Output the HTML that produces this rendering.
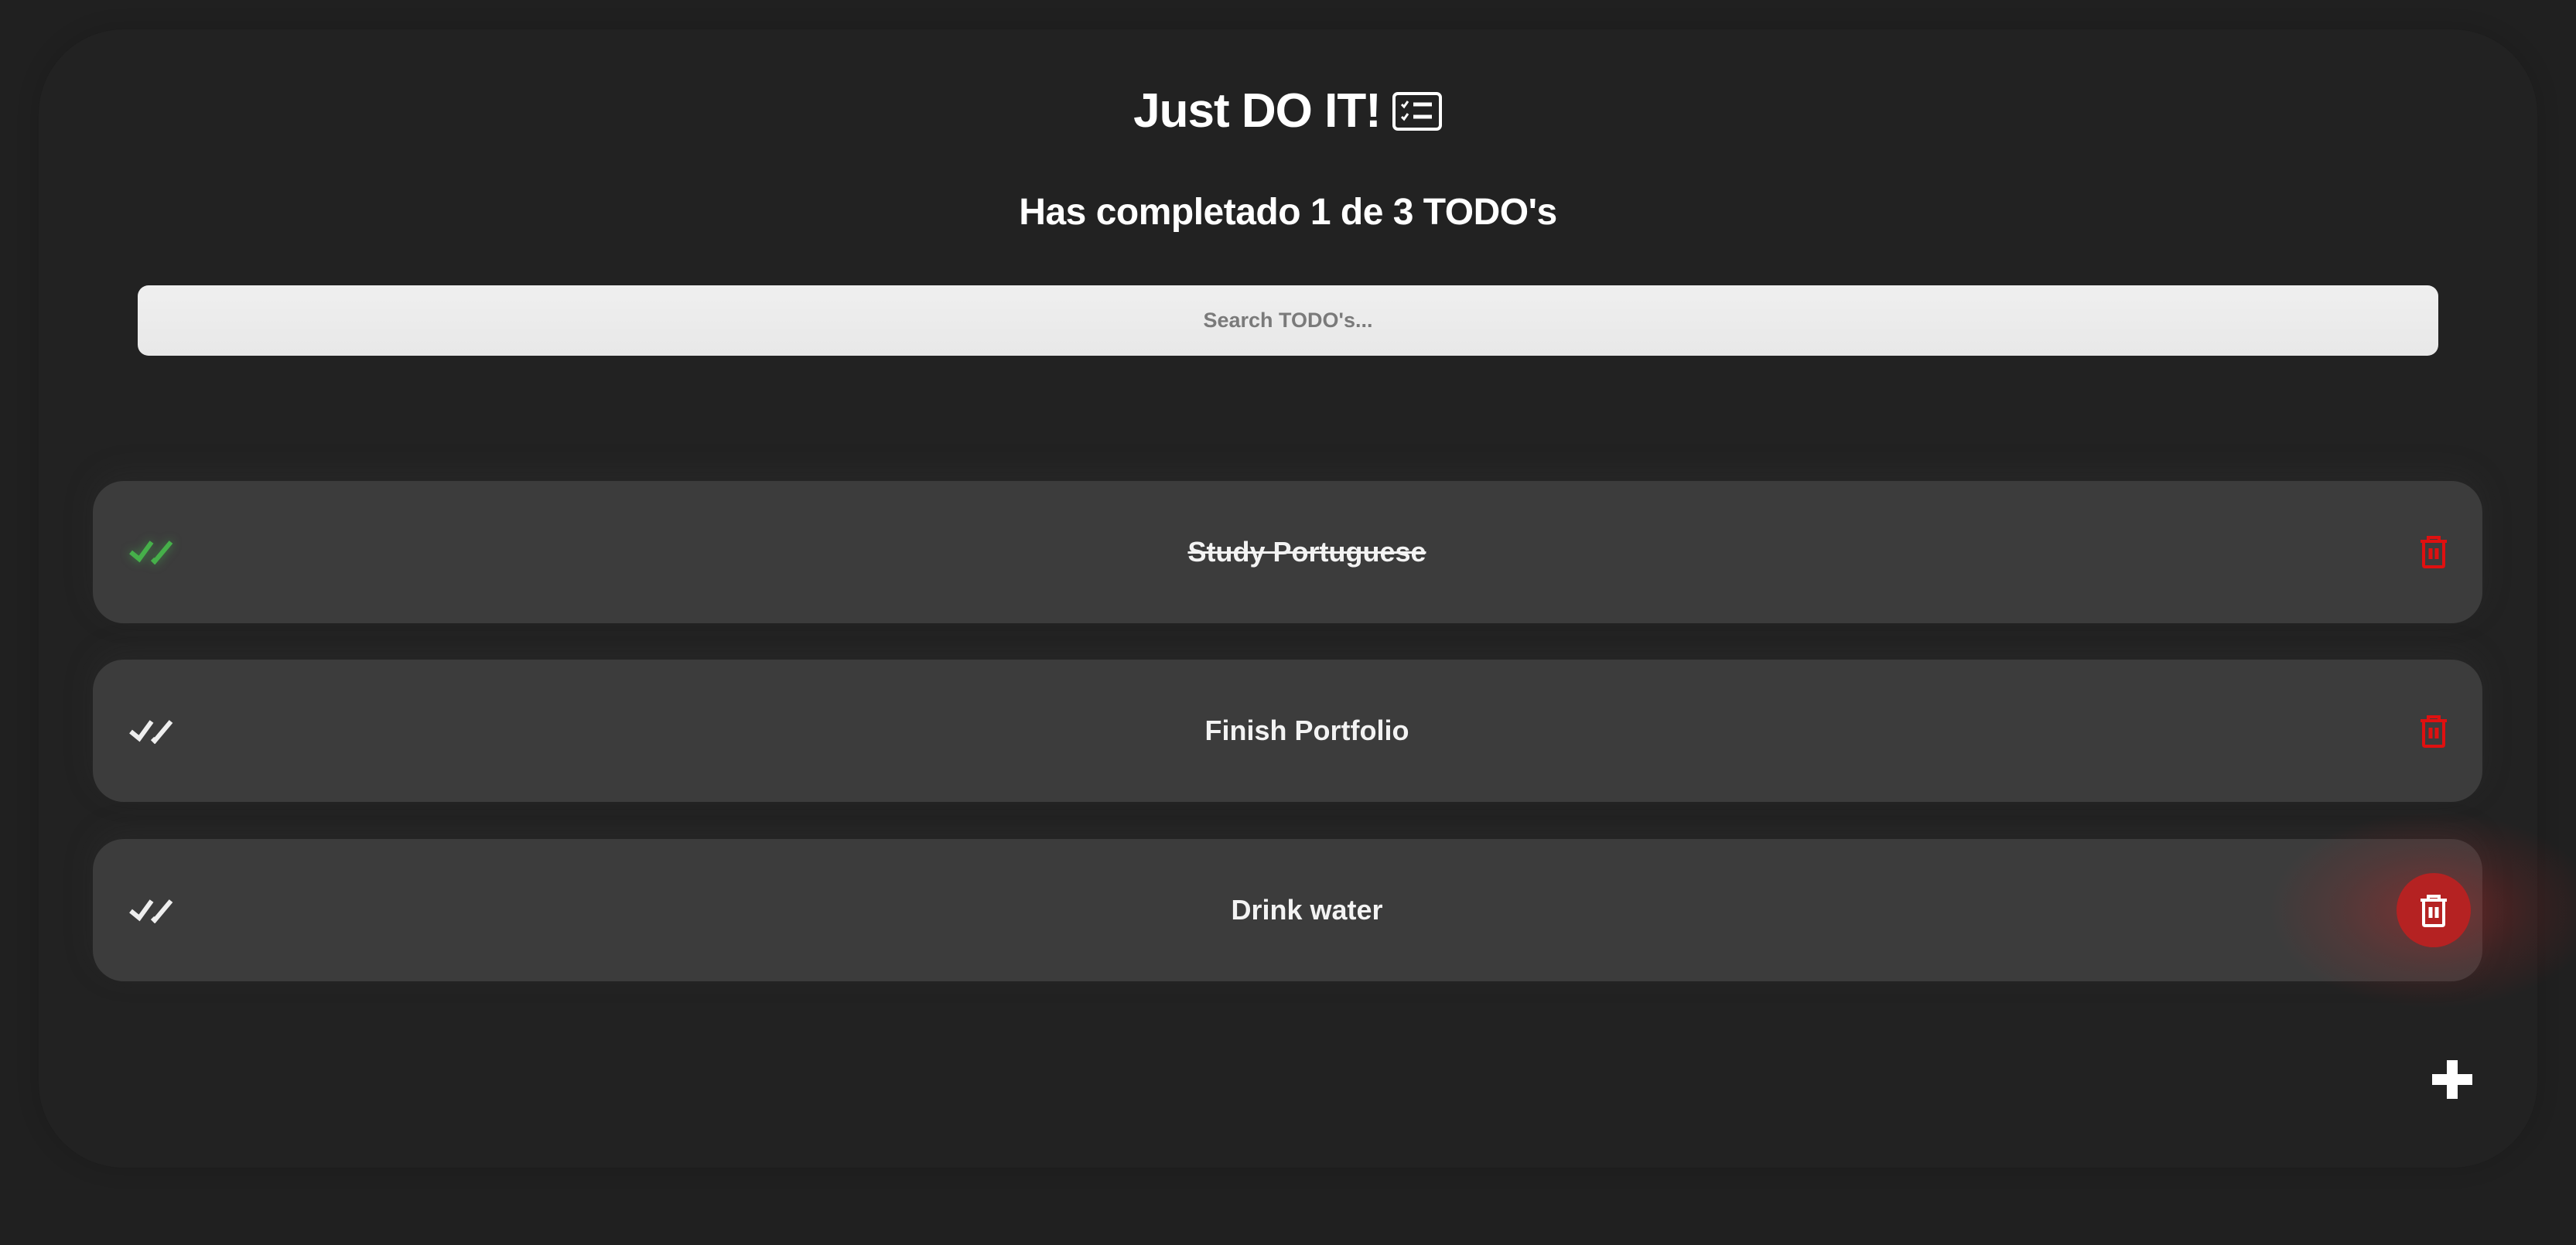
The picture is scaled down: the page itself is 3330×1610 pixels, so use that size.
<!DOCTYPE html>
<html><head><meta charset="utf-8"><style>
*{margin:0;padding:0;box-sizing:border-box}
body{width:3330px;height:1610px;background:#202020;font-family:"Liberation Sans",sans-serif;position:relative;overflow:hidden}
.cont{position:absolute;left:50px;top:38px;width:3230px;height:1472px;border-radius:110px;background:#222;box-shadow:0 0 30px rgba(0,0,0,.15)}
h1{position:absolute;left:0;width:3330px;top:108px;text-align:center;color:#fff;font-size:62px;font-weight:700;letter-spacing:-1px}
h1 svg{vertical-align:-6px;margin-left:14px}
h2{position:absolute;left:0;width:3330px;top:247px;text-align:center;color:#fff;font-size:48px;font-weight:700;letter-spacing:-.5px}
.search{position:absolute;left:178px;top:369px;width:2974px;height:91px;border-radius:14px;background:linear-gradient(#efefef,#e8e8e8);color:#7a7a7a;font-size:27px;font-weight:700;text-align:center;line-height:91px}
.item{position:absolute;left:120px;width:3089px;height:184px;border-radius:40px;background:#3c3c3c;box-shadow:0 -10px 40px rgba(60,60,60,.2);overflow:hidden}
.item .t{position:absolute;left:25px;width:100%;top:0;line-height:184px;text-align:center;color:#f3f3f3;font-size:36px;font-weight:700}
.trash{position:absolute;left:3127px;width:38px;height:44px}
.glow{position:absolute;left:2896px;top:1027px;width:500px;height:300px;background:radial-gradient(ellipse at center,rgba(190,40,40,.45) 0%,rgba(190,40,40,.15) 35%,rgba(190,40,40,0) 60%)}
.circ{position:absolute;left:3098px;top:1129px;width:96px;height:96px;border-radius:50%;background:#b52222}
.plus1{position:absolute;left:3144px;top:1389px;width:52px;height:14px;background:#fff}
.plus2{position:absolute;left:3163px;top:1371px;width:14px;height:50px;background:#fff}
</style></head><body>
<div class="cont"></div>
<h1>Just DO IT!<svg width="66" height="52" viewBox="0 0 66 52"><rect x="3" y="3" width="60" height="46" rx="5" fill="none" stroke="#fff" stroke-width="4"/><path d="M13 17l3 3 5-7M13 33l3 3 5-7" stroke="#fff" stroke-width="3" fill="none"/><path d="M28 17h24M28 33h24" stroke="#fff" stroke-width="5"/></svg></h1>
<h2>Has completado 1 de 3 TODO's</h2>
<div class="search">Search TODO's...</div>

<div class="item" style="top:622px"><div class="t" style="text-decoration:line-through">Study Portuguese</div></div>
<div class="item" style="top:853px"><div class="t">Finish Portfolio</div></div>
<div class="item" style="top:1085px"><div class="t">Drink water</div></div>
<div class="glow"></div>

<svg style="position:absolute;left:166px;top:698px;filter:drop-shadow(0 0 6px rgba(70,180,80,.6))" width="60" height="32" viewBox="0 0 60 32"><path d="M3 16l11 9 16-22M31 25l3 3 21-25" stroke="#46b04a" stroke-width="6" fill="none"/></svg>
<svg style="position:absolute;left:166px;top:930px" width="60" height="32" viewBox="0 0 60 32"><path d="M3 16l11 9 16-22M31 25l3 3 21-25" stroke="#eee" stroke-width="6" fill="none"/></svg>
<svg style="position:absolute;left:166px;top:1162px" width="60" height="32" viewBox="0 0 60 32"><path d="M3 16l11 9 16-22M31 25l3 3 21-25" stroke="#eee" stroke-width="6" fill="none"/></svg>

<div class="circ"></div>
<svg class="trash" style="top:692px" viewBox="0 0 36 44"><path d="M1 8h34M11 8V3h14v5M5 8v31q0 2 2 2h22q2 0 2-2V8" stroke="#e01010" stroke-width="4" fill="none"/><path d="M14 17v14M22 17v14" stroke="#e01010" stroke-width="5"/></svg>
<svg class="trash" style="top:924px" viewBox="0 0 36 44"><path d="M1 8h34M11 8V3h14v5M5 8v31q0 2 2 2h22q2 0 2-2V8" stroke="#e01010" stroke-width="4" fill="none"/><path d="M14 17v14M22 17v14" stroke="#e01010" stroke-width="5"/></svg>
<svg class="trash" style="top:1156px" viewBox="0 0 36 44"><path d="M1 8h34M11 8V3h14v5M5 8v31q0 2 2 2h22q2 0 2-2V8" stroke="#fff" stroke-width="4" fill="none"/><path d="M14 17v14M22 17v14" stroke="#fff" stroke-width="5"/></svg>

<div class="plus1"></div><div class="plus2"></div>
</body></html>
